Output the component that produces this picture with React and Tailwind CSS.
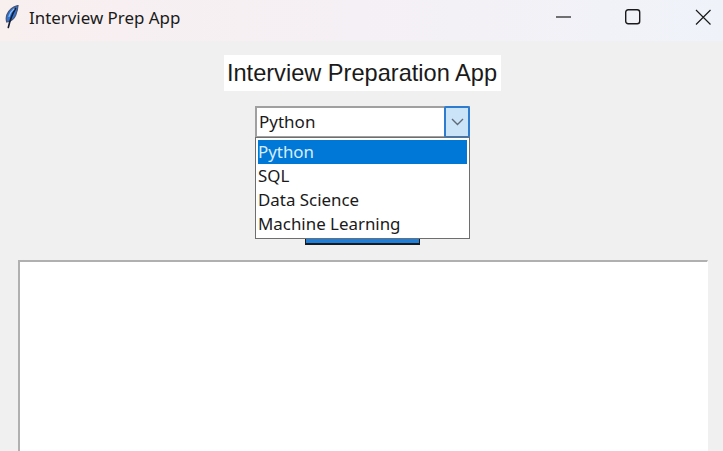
const FONT_UI = 'font-["Noto_Sans",sans-serif]';

const Feather = () => (
  <svg width="18" height="28" viewBox="0 0 18 28" fill="none">
    <path d="M15 0.500C10.500 1.500 6 5 4 9.500c-1 2.500-1 5-.300 7.500 4-.500 7.300-3 9-6.800C14 7 14.800 3.500 15 0.500z" fill="#2f74d8" stroke="#4a5570" strokeWidth="1.200" />
    <path d="M12.500 3.500C9.800 8 7.300 14 5.300 22.500" stroke="#151d30" strokeWidth="1.600" strokeLinecap="round" />
    <path d="M11 4C8.500 6 6.800 8.500 6 11.500" stroke="#8fbff2" strokeWidth="1.200" strokeLinecap="round" />
  </svg>
);

const ITEMS = ['Python', 'SQL', 'Data Science', 'Machine Learning'];

export default function App() {
  return (
    <div className="w-[723px] h-[451px] overflow-hidden flex flex-col bg-[#f0f0f0]">
      {/* Title bar */}
      <div className="h-[41px] flex items-center bg-gradient-to-r from-[#f8efef] via-[#f5f0f5] to-[#eff3f9]">
        <div className="w-[29px] pl-[3px] pb-[4px] flex"><Feather /></div>
        <span className='text-[16.9px] text-[#1a1a1a] font-["Noto_Sans",sans-serif] -mt-[6px]'>Interview Prep App</span>
        <div className="ml-auto flex items-center -mt-[7px]">
          <svg width="16" height="16" viewBox="0 0 16 16" className="mr-[54px]"><path d="M1 8h15" stroke="#1a1a1a" strokeWidth="1.2" /></svg>
          <svg width="16" height="16" viewBox="0 0 16 16" className="mr-[54px]"><rect x="0.700" y="0.700" width="14" height="14" rx="2.500" fill="none" stroke="#1a1a1a" strokeWidth="1.400" /></svg>
          <svg width="16" height="16" viewBox="0 0 16 16" className="mr-[12px]"><path d="M1 1l14.500 14.500M15.500 1L1 15.500" stroke="#1a1a1a" strokeWidth="1.200" /></svg>
        </div>
      </div>

      {/* Body */}
      <div className="flex-1 min-h-0 flex flex-col items-center pl-[2px]">
        <div className='mt-[14px] -ml-[1px] h-[36px] w-[277px] pt-[2px] bg-white flex items-center justify-center text-[23.6px] text-[#1a1a1a] font-["Liberation_Sans",sans-serif]'>
          Interview Preparation App
        </div>

        {/* Combobox */}
        <div className="relative mt-[15px] w-[215px] h-[32px]">
          <div className="h-full flex border-2 border-[#a0a0a0] border-r-0 bg-white">
            <span className={`${FONT_UI} flex-1 pl-[2px] text-[17px] leading-[28px] text-[#1a1a1a]`}>Python</span>
          </div>
          <div className="absolute right-0 top-0 w-[26px] h-full flex items-center justify-center bg-[#cce4f7] border-2 border-[#2d7ccf] rounded-[2px]">
            <svg width="13" height="8" viewBox="0 0 13 8"><path d="M1 1l5.500 5.500L12 1" fill="none" stroke="#5f6b78" strokeWidth="1.400" /></svg>
          </div>

          {/* Dropdown list */}
          <div className="absolute left-0 top-[31px] z-10 w-[215px] h-[102px] border border-[#6e6e6e] bg-white p-[2px]">
            {ITEMS.map((item, i) => (
              <div
                key={item}
                className={`${FONT_UI} h-[24px] text-[16.9px] leading-[24px] ${i === 0 ? 'bg-[#0078d7] text-[#d8ecfb]' : 'text-[#1a1a1a]'}`}
              >
                {item}
              </div>
            ))}
          </div>
        </div>

        {/* Button, mostly covered by the open list */}
        <div className="mt-[75px] w-[115px] h-[32px] shrink-0 bg-[#1e80dc] border-x border-b-2 border-[#1a1a1a]" />

        {/* Text area */}
        <div className="mt-[15px] self-start ml-[16px] w-[690px] flex-1 bg-white border-t-2 border-l-2 border-r border-t-[#b0b0b0] border-l-[#b0b0b0] border-r-white" />
      </div>
    </div>
  );
}
